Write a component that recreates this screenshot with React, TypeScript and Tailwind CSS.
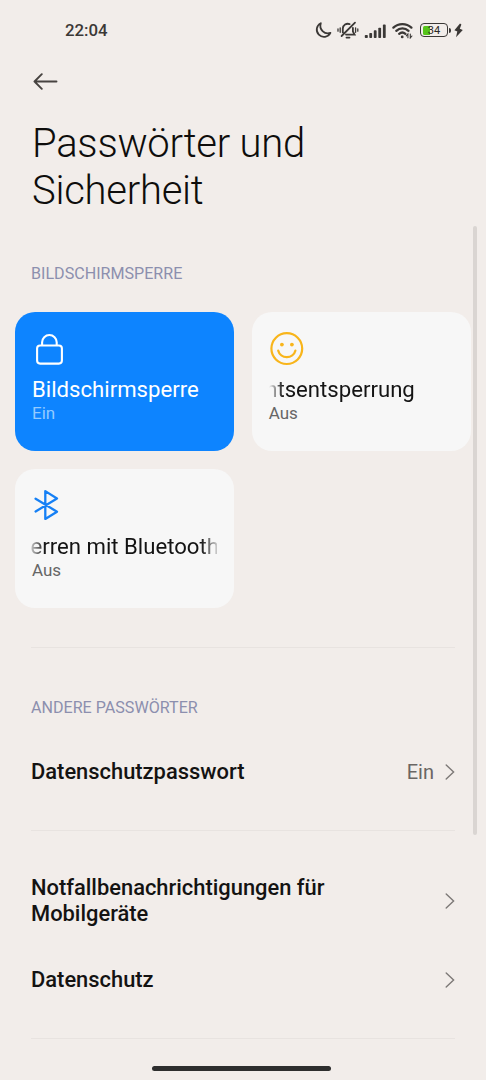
import type { ReactNode } from "react";

type Card = {
  title: string;
  status: string;
  icon: ReactNode;
  active?: boolean;
  titleClass?: string;
};

function StatusIcons() {
  return (
    <div className="flex items-center">
      {/* do not disturb */}
      <svg width="18" height="18" viewBox="0 0 18 18" fill="none" stroke="#3b3836" strokeWidth="1.8" strokeLinejoin="round">
        <path d="M5.8 2.2A7.2 7.2 0 1 0 15.4 11.9A7.6 7.6 0 0 1 5.8 2.2Z" />
      </svg>
      {/* muted bell */}
      <svg className="ml-[4px]" width="22" height="18" viewBox="0 0 22 18" fill="none" stroke="#3b3836" strokeWidth="1.8" strokeLinecap="round">
        <path d="M5.8 11.3V7.6A5 5 0 0 1 12.6 3.1M15.9 6.8V10.5L17.6 13.6H9M9.5 16.6H12.5M18 1.6L4.6 15" />
        <path d="M3.2 6.8V11.3M1 8V10.2M18.6 6.8V11.3M20.8 8V10.2" strokeWidth="1.3" />
      </svg>
      {/* signal */}
      <svg className="ml-[5px]" width="23" height="18" viewBox="0 0 23 18" fill="#3b3836">
        <rect x="0.8" y="14" width="3" height="3" rx="0.8" />
        <rect x="5.3" y="12" width="2.8" height="5" rx="0.8" />
        <rect x="9.8" y="9.3" width="2.8" height="7.7" rx="0.8" />
        <rect x="14.3" y="6.8" width="2.8" height="10.2" rx="0.8" />
        <rect x="18.9" y="3.6" width="2.8" height="13.4" rx="0.8" />
      </svg>
      {/* wifi */}
      <svg className="ml-[5px]" width="21" height="18" viewBox="0 0 21 18" fill="none" stroke="#3b3836" strokeWidth="2.3" strokeLinecap="round">
        <path d="M1.4 6.6A13.2 13.2 0 0 1 19.4 6.6M4.3 9.8A9 9 0 0 1 16.5 9.8M7.2 12.8A4.9 4.9 0 0 1 13.4 12.8" />
        <circle cx="10.2" cy="15.9" r="1.4" fill="#3b3836" stroke="none" />
        <path d="M14.3 14.9L15.9 13V16.8M19.9 15L18.3 16.9V13" strokeWidth="1.1" />
      </svg>
      {/* battery */}
      <div className="ml-[7px] flex items-center">
        <div className="relative flex h-[14px] w-[28px] items-center rounded-[4px] border-[1.5px] border-[#3b3836] px-[2px]">
          <div className="h-[9px] w-[7px] rounded-l-[1.5px] bg-[#56c41a]" />
          <span className="absolute inset-0 text-center text-[11px] leading-[13px] text-[#2b2927]">34</span>
        </div>
        <div className="ml-px h-[5px] w-[2px] rounded-r-sm bg-[#3b3836]" />
      </div>
      <svg className="ml-[3px]" width="9" height="15" viewBox="0 0 9 15" fill="#3b3836">
        <path d="M6 0.6L0.4 7.2L3.3 8.6L2 14.2L8.8 7L5.8 5.8L7.4 1.4Z" />
      </svg>
    </div>
  );
}

const LockIcon = () => (
  <svg width="36" height="36" viewBox="0 0 36 36" fill="none" stroke="white" strokeWidth="2.1">
    <rect x="5.1" y="14.5" width="24.8" height="18.1" rx="3" />
    <path d="M10.1 14.5V11.3A7.3 7.3 0 0 1 24.7 11.3V14.5" />
  </svg>
);

const FaceIcon = () => (
  <svg width="36" height="36" viewBox="0 0 36 36" fill="none" stroke="#f8b51b" strokeWidth="2.2" strokeLinecap="round">
    <circle cx="17.8" cy="17.6" r="15.4" />
    <path d="M9.2 19.6A8.9 8.9 0 0 0 26.4 19.6" />
    <circle cx="12.9" cy="13.6" r="1.9" fill="#f8b51b" stroke="none" />
    <circle cx="22.9" cy="13.6" r="1.9" fill="#f8b51b" stroke="none" />
  </svg>
);

const BluetoothIcon = () => (
  <svg width="36" height="36" viewBox="0 0 36 36" fill="none" stroke="#1680f5" strokeWidth="2.3" strokeLinecap="round" strokeLinejoin="round">
    <path d="M3.6 10.7L25 23.7L13.3 30.9V3.1L25 10.5L3.6 23.5" />
  </svg>
);

const Chevron = () => (
  <svg className="shrink-0" width="10" height="16" viewBox="0 0 10 16" fill="none" stroke="#7d7977" strokeWidth="1.4" strokeLinecap="round">
    <path d="M1.2 1L8.6 8L1.2 15" />
  </svg>
);

const cards: Card[] = [
  { title: "Bildschirmsperre", status: "Ein", icon: <LockIcon />, active: true },
  {
    title: "htsentsperrung",
    status: "Aus",
    icon: <FaceIcon />,
    titleClass: "-ml-[3.5px] [mask-image:linear-gradient(to_right,transparent_4px,black_18px)]",
  },
  {
    title: "erren mit Bluetooth",
    status: "Aus",
    icon: <BluetoothIcon />,
    titleClass: "-ml-[1.5px] [mask-image:linear-gradient(to_right,transparent_-4px,black_14px,black_170px,transparent_190px)]",
  },
];

function LockCard({ title, status, icon, active, titleClass = "" }: Card) {
  return (
    <div className={`h-[139px] rounded-[20px] px-[17px] pt-[19px] ${active ? "bg-[#0d84ff]" : "bg-[#f7f7f7]"}`}>
      {icon}
      <div className={`mt-[8px] whitespace-nowrap text-[22.15px] leading-[28px] ${active ? "text-white" : "text-[#141414]"} ${titleClass}`}>
        {title}
      </div>
      <div className={`text-[17px] leading-5 ${active ? "text-[#94cbff]" : "text-[#666]"}`}>{status}</div>
    </div>
  );
}

function Row({ label, value }: { label: string; value?: string }) {
  return (
    <div className="flex items-center justify-between">
      <span className="w-[330px] text-[21.9px] font-medium leading-[26px] text-[#141312]">{label}</span>
      <div className="flex items-center gap-[11px]">
        {value && <span className="text-[20px] leading-[26px] text-[#6a6664]">{value}</span>}
        <Chevron />
      </div>
    </div>
  );
}

export default function App() {
  return (
    <div className="relative h-[1080px] w-[486px] overflow-hidden bg-[#f2edea] font-['Roboto',sans-serif]">
      <div className="flex h-[60px] items-center justify-between pl-[65px] pr-[23px]">
        <span className="pt-px text-[16.8px] font-medium text-[#3b3836]">22:04</span>
        <StatusIcons />
      </div>

      <div className="px-[32px] pt-[13px]">
        <svg className="ml-px" width="25" height="17" viewBox="0 0 25 17" fill="none" stroke="#474340" strokeWidth="1.9" strokeLinecap="round" strokeLinejoin="round">
          <path d="M23.5 8.5H1.5M8.8 1.2L1.5 8.5L8.8 15.8" />
        </svg>
        <h1 className="mt-[30px] text-[40px] font-light leading-[47px] tracking-[-0.25px] text-[#0e0d0c]">
          Passwörter und
          <br />
          Sicherheit
        </h1>
      </div>

      <h2 className="mt-[50px] px-[31px] text-[16.1px] leading-5 text-[#8c8fae]">BILDSCHIRMSPERRE</h2>

      <div className="mt-[28px] grid grid-cols-2 gap-[17.5px] px-[15px]">
        {cards.map((card) => (
          <LockCard key={card.title} {...card} />
        ))}
      </div>

      <div className="mx-[31px] mt-[39.5px] h-px bg-[#e8e3e0]" />

      <h2 className="mt-[50px] px-[31px] text-[16.1px] leading-5 text-[#8c8fae]">ANDERE PASSWÖRTER</h2>

      <div className="px-[31px]">
        <div className="mt-[41px]">
          <Row label="Datenschutzpasswort" value="Ein" />
        </div>
        <div className="mt-[45px] h-px bg-[#e8e3e0]" />
        <div className="mt-[44px]">
          <Row label="Notfallbenachrichtigungen für Mobilgeräte" />
        </div>
        <div className="mt-[40px]">
          <Row label="Datenschutz" />
        </div>
        <div className="mt-[45px] h-px bg-[#e8e3e0]" />
      </div>

      {/* scrollbar */}
      <div className="absolute right-[9px] top-[226px] h-[609px] w-[4px] rounded-full bg-[#dad5d2]" />
      {/* gesture bar */}
      <div className="absolute bottom-[9px] left-[152px] h-[5px] w-[179px] rounded-full bg-[#2e2e2e]" />
    </div>
  );
}
